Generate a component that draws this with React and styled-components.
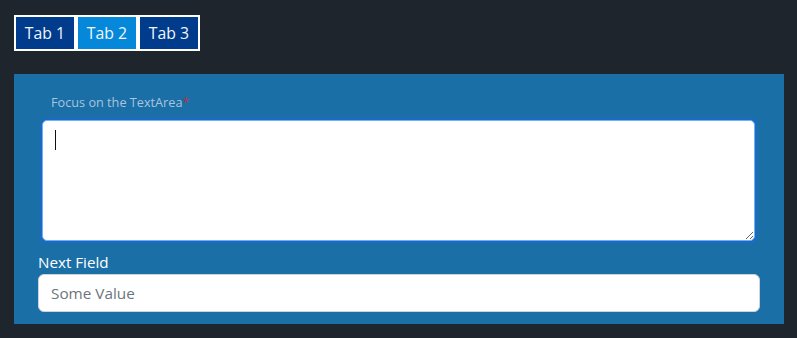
import React from 'react'
import styled, { createGlobalStyle } from 'styled-components'

const GlobalStyle = createGlobalStyle`
  html, body {
    margin: 0;
    background: #1f252d;
    font-family: "Open Sans", "Noto Sans", sans-serif;
  }
`

const Page = styled.div`
  padding: 15px 13px 14px 14px;
  display: flex;
  flex-direction: column;
  gap: 23px;
`

const Tabs = styled.div`
  display: flex;
`

const Tab = styled.button`
  width: 62px;
  height: 36px;
  border: 2px solid #ffffff;
  margin: 0;
  padding: 0;
  background: ${(p) => (p.active ? '#0688da' : '#013c8c')};
  color: #f2f6fb;
  font-family: "Open Sans", sans-serif;
  font-size: 15.8px;
  cursor: pointer;
`

const Panel = styled.div`
  background: #1a6fa7;
  padding: 20px 24px 12px 24px;
  display: flex;
  flex-direction: column;
`

const Group = styled.div`
  padding: 0 5px 0 4px;
  display: flex;
  flex-direction: column;
  gap: 9px;
`

const SmallLabel = styled.label`
  padding-left: 9px;
  font-size: 12.7px;
  line-height: 17px;
  color: #a9c4dc;
`

const Required = styled.span`
  color: #b8323f;
`

const AreaWrap = styled.div`
  position: relative;
  display: flex;
`

const TextArea = styled.textarea`
  flex: 1;
  height: 121px;
  box-sizing: border-box;
  border: 1px solid #70b0f5;
  border-radius: 5px;
  box-shadow: 0 0 0 2px #1b6bc6;
  background: #ffffff;
  resize: vertical;
  outline: none;
  padding: 8px 12px;
  font-family: "Open Sans", sans-serif;
  font-size: 15px;
`

const Caret = styled.span`
  position: absolute;
  left: 13px;
  top: 10px;
  width: 1px;
  height: 20px;
  background: #111;
`

const FieldLabel = styled.label`
  margin-top: 11px;
  font-size: 15.2px;
  line-height: 20px;
  color: #ffffff;
`

const Input = styled.input`
  box-sizing: border-box;
  height: 38px;
  margin-top: 2px;
  border: 1px solid #cfd4da;
  border-radius: 6px;
  padding: 0 12px;
  background: #ffffff;
  font-family: "Open Sans", sans-serif;
  font-size: 15.3px;
  color: #212529;
  outline: none;
  &::placeholder {
    color: #6c757d;
  }
`

export default function App() {
  return (
    <>
      <GlobalStyle />
      <Page>
        <Tabs>
          <Tab>Tab 1</Tab>
          <Tab active>Tab 2</Tab>
          <Tab>Tab 3</Tab>
        </Tabs>
        <Panel>
          <Group>
            <SmallLabel>
              Focus on the TextArea<Required>*</Required>
            </SmallLabel>
            <AreaWrap>
              <TextArea readOnly />
              <Caret />
            </AreaWrap>
          </Group>
          <FieldLabel>Next Field</FieldLabel>
          <Input placeholder="Some Value" />
        </Panel>
      </Page>
    </>
  )
}
